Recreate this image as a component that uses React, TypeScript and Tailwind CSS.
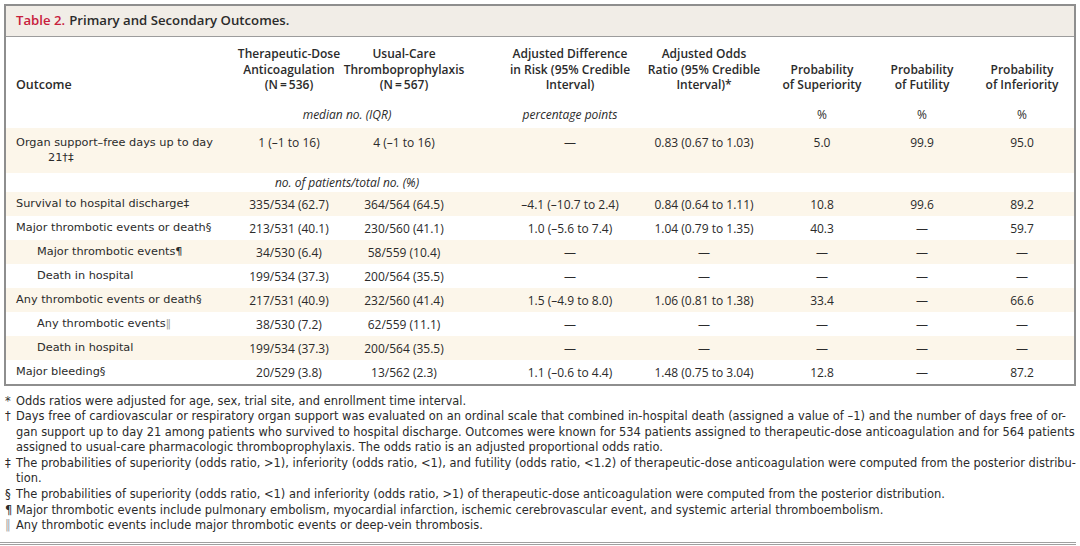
const D = "—";

type Row = {
  label: React.ReactNode;
  indent?: boolean;
  cells: string[];
  shaded?: boolean;
};

const Bar = () => <span className="text-[#a3a3a3]">‖</span>;

const rows: Row[] = [
  { label: "Survival to hospital discharge‡", cells: ["335/534 (62.7)", "364/564 (64.5)", "–4.1 (–10.7 to 2.4)", "0.84 (0.64 to 1.11)", "10.8", "99.6", "89.2"], shaded: true },
  { label: "Major thrombotic events or death§", cells: ["213/531 (40.1)", "230/560 (41.1)", "1.0 (–5.6 to 7.4)", "1.04 (0.79 to 1.35)", "40.3", D, "59.7"] },
  { label: "Major thrombotic events¶", indent: true, cells: ["34/530 (6.4)", "58/559 (10.4)", D, D, D, D, D], shaded: true },
  { label: "Death in hospital", indent: true, cells: ["199/534 (37.3)", "200/564 (35.5)", D, D, D, D, D] },
  { label: "Any thrombotic events or death§", cells: ["217/531 (40.9)", "232/560 (41.4)", "1.5 (–4.9 to 8.0)", "1.06 (0.81 to 1.38)", "33.4", D, "66.6"], shaded: true },
  { label: <>Any thrombotic events<Bar /></>, indent: true, cells: ["38/530 (7.2)", "62/559 (11.1)", D, D, D, D, D] },
  { label: "Death in hospital", indent: true, cells: ["199/534 (37.3)", "200/564 (35.5)", D, D, D, D, D], shaded: true },
  { label: "Major bleeding§", cells: ["20/529 (3.8)", "13/562 (2.3)", "1.1 (–0.6 to 4.4)", "1.48 (0.75 to 3.04)", "12.8", D, "87.2"] },
];

// column tracks: outcome | dose | usual | diff | odds | sup | fut | inf
const grid = "grid grid-cols-[226px_114px_116px_176px_132px_104px_96px_1fr]";

// numbers are set in Open Sans (narrow figures), labels in DejaVu Sans
function Cell({ children, col }: { children: React.ReactNode; col: number }) {
  return (
    <div
      className={`flex min-w-0 justify-center whitespace-nowrap font-['Open_Sans',sans-serif] text-[12px] ${col === 3 ? "pl-[40px]" : ""}`}
    >
      {children}
    </div>
  );
}

const headers = [
  ["Therapeutic-Dose", "Anticoagulation", "(N\u2009=\u2009536)"],
  ["Usual-Care", "Thromboprophylaxis", "(N\u2009=\u2009567)"],
  ["Adjusted Difference", "in Risk (95% Credible", "Interval)"],
  ["Adjusted Odds", "Ratio (95% Credible", "Interval)*"],
  ["Probability", "of Superiority"],
  ["Probability", "of Futility"],
  ["Probability", "of Inferiority"],
];

type Note = { sym: React.ReactNode; lines: { text: string; full?: boolean }[] };

const notes: Note[] = [
  { sym: "*", lines: [{ text: "Odds ratios were adjusted for age, sex, trial site, and enrollment time interval." }] },
  {
    sym: "†",
    lines: [
      { text: "Days free of cardiovascular or respiratory organ support was evaluated on an ordinal scale that combined in-hospital death (assigned a value of –1) and the number of days free of or-", full: true },
      { text: "gan support up to day 21 among patients who survived to hospital discharge. Outcomes were known for 534 patients assigned to therapeutic-dose anticoagulation and for 564 patients", full: true },
      { text: "assigned to usual-care pharmacologic thromboprophylaxis. The odds ratio is an adjusted proportional odds ratio." },
    ],
  },
  {
    sym: "‡",
    lines: [
      { text: "The probabilities of superiority (odds ratio, >1), inferiority (odds ratio, <1), and futility (odds ratio, <1.2) of therapeutic-dose anticoagulation were computed from the posterior distribu-", full: true },
      { text: "tion." },
    ],
  },
  { sym: "§", lines: [{ text: "The probabilities of superiority (odds ratio, <1) and inferiority (odds ratio, >1) of therapeutic-dose anticoagulation were computed from the posterior distribution." }] },
  { sym: "¶", lines: [{ text: "Major thrombotic events include pulmonary embolism, myocardial infarction, ischemic cerebrovascular event, and systemic arterial thromboembolism." }] },
  { sym: <Bar />, lines: [{ text: "Any thrombotic events include major thrombotic events or deep-vein thrombosis." }] },
];

const organCells = ["1 (–1 to 16)", "4 (–1 to 16)", D, "0.83 (0.67 to 1.03)", "5.0", "99.9", "95.0"];

export default function App() {
  return (
    <div className="h-[546px] w-[1080px] overflow-hidden bg-white pt-[4px] font-['DejaVu_Sans',sans-serif] text-[#2b2b2b]">
      <div className="ml-[4px] w-[1072px] border-2 border-[#8e8e8e]">
        {/* Title bar */}
        <div className="flex h-[31px] items-center border-b border-[#9c9c9c] bg-[#f1ede7] pl-[10px] font-['Open_Sans',sans-serif] text-[13.2px] font-semibold">
          <span className="text-[#c8203c]">Table 2.</span>
          <span className="ml-[4px]">Primary and Secondary Outcomes.</span>
        </div>

        {/* Column headers */}
        <div className={`${grid} items-end pt-[9px] font-['Open_Sans',sans-serif] text-[12px] font-semibold leading-[15.5px]`}>
          <div className="pl-[10px] text-[12.5px]">Outcome</div>
          {headers.map((h, i) => (
            <div key={i} className={`flex min-w-0 flex-col items-center whitespace-nowrap ${i === 2 ? "pl-[40px]" : ""}`}>
              {h.map((l) => (
                <span key={l}>{l}</span>
              ))}
            </div>
          ))}
        </div>

        {/* Units row */}
        <div className={`${grid} h-[35px] pt-[14px] font-['Open_Sans',sans-serif] text-[12px] leading-[16px]`}>
          <div />
          <div className="col-span-2 flex justify-center italic">median no. (IQR)</div>
          <div className="flex justify-center pl-[40px] italic">percentage points</div>
          <div />
          <Cell col={5}>%</Cell>
          <Cell col={6}>%</Cell>
          <Cell col={7}>%</Cell>
        </div>

        {/* Organ support row */}
        <div className={`${grid} h-[45px] bg-[#fcf6ea] pt-[7px] leading-[15.5px]`}>
          <div className="whitespace-nowrap pl-[10px] text-[11.3px]">
            Organ support–free days up to day
            <br />
            <span className="pl-[32px]">21†‡</span>
          </div>
          {organCells.map((c, i) => (
            <Cell key={i} col={i + 1}>
              {c}
            </Cell>
          ))}
        </div>

        <div className={`${grid} h-[19px] font-['Open_Sans',sans-serif] text-[12px] italic leading-[19px]`}>
          <div />
          <div className="col-span-2 flex justify-center">no. of patients/total no. (%)</div>
        </div>

        {rows.map((r, ri) => (
          <div
            key={ri}
            className={`${grid} h-[24px] items-center pt-[2px] ${r.shaded ? "bg-[#fcf6ea]" : "bg-white"}`}
          >
            <div className={`whitespace-nowrap text-[11.3px] ${r.indent ? "pl-[31px]" : "pl-[10px]"}`}>{r.label}</div>
            {r.cells.map((c, i) => (
              <Cell key={i} col={i + 1}>
                {c}
              </Cell>
            ))}
          </div>
        ))}
      </div>

      {/* Footnotes */}
      <div className="mt-[8px] w-[1066px] text-[11.45px] leading-[15.6px]">
        {notes.map((n, ni) => (
          <div key={ni} className="flex">
            <span className="w-[16px] shrink-0 pl-[5px]">{n.sym}</span>
            <div className="min-w-0 flex-1">
              {n.lines.map((l, i) => (
                <div
                  key={i}
                  className={`whitespace-nowrap ${l.full ? "text-justify [text-align-last:justify]" : ""}`}
                >
                  {l.text}
                </div>
              ))}
            </div>
          </div>
        ))}
      </div>
      <div className="mt-[8px] h-[3px] w-[1076px] border-y border-[#a0a0a0]" />
    </div>
  );
}
